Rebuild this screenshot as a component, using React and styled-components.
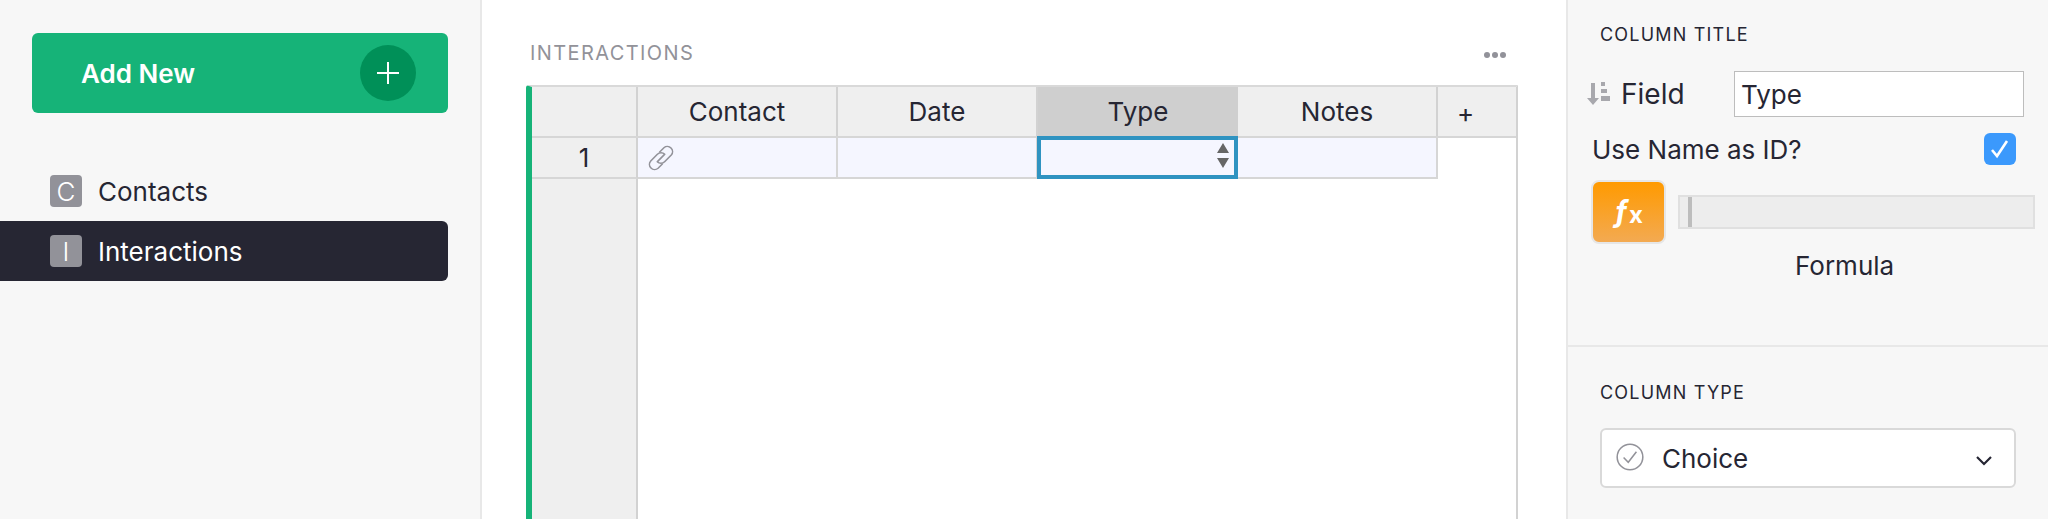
import React from "react";
import styled, { createGlobalStyle } from "styled-components";

const Global = createGlobalStyle`
  html, body { margin: 0; padding: 0; height: 519px; overflow: hidden; background: #fff; }
  * { box-sizing: border-box; }
  #root { height: 519px; }
`;

const Page = styled.div`
  display: flex;
  width: 2048px;
  height: 519px;
  overflow: hidden;
  font-family: Inter, "Liberation Sans", sans-serif;
  color: #262633;
`;

const Sidebar = styled.aside`
  width: 482px;
  flex: none;
  background: #f7f7f7;
  border-right: 2px solid #e8e8e8;
  padding-top: 33px;
`;

const AddButton = styled.div`
  display: flex;
  align-items: center;
  justify-content: space-between;
  width: 416px;
  height: 80px;
  margin-left: 32px;
  padding: 0 32px 0 49px;
  background: #16b378;
  border-radius: 6px;
  color: #fff;
  font-size: 26px;
  font-weight: 600;
`;

const AddCircle = styled.span`
  display: flex;
  align-items: center;
  justify-content: center;
  width: 56px;
  height: 56px;
  border-radius: 50%;
  background: #009058;
`;

const PageList = styled.nav`
  margin-top: 48px;
  width: 448px;
  display: flex;
  flex-direction: column;
`;

const PageRow = styled.div`
  display: flex;
  align-items: center;
  gap: 16px;
  height: 60px;
  padding-left: 50px;
  font-size: 26px;
  border-radius: 0 6px 6px 0;
  background: ${(p) => (p.$active ? "#262633" : "transparent")};
  color: ${(p) => (p.$active ? "#fff" : "#262633")};
`;

const PageBadge = styled.span`
  display: flex;
  align-items: center;
  justify-content: center;
  width: 32px;
  height: 32px;
  border-radius: 4px;
  background: #929299;
  color: #fff;
  font-size: 26px;
  font-weight: 300;
`;

const Main = styled.main`
  flex: 1;
  min-width: 0;
  background: #fff;
  padding: 0 48px 0 44px;
`;

const SectionHeader = styled.div`
  display: flex;
  align-items: center;
  justify-content: space-between;
  height: 85px;
  padding: 21px 12px 0 4px;
`;

const SectionTitle = styled.div`
  font-size: 20px;
  letter-spacing: 1.4px;
  color: #929299;
`;

const Dots = styled.div`
  display: flex;
  gap: 2px;
  margin-top: 4px;
`;

const Dot = styled.span`
  width: 6px;
  height: 6px;
  border-radius: 50%;
  background: #929299;
`;

const Grid = styled.div`
  position: relative;
  width: 992px;
  height: 434px;
  display: flex;
  flex-direction: column;
  border-left: 6px solid #16b378;
  border-top: 2px solid #d9d9d9;
  border-right: 2px solid #d2d2d2;
  border-top-left-radius: 3px;
`;

const HeaderRow = styled.div`
  display: flex;
  height: 51px;
  flex: none;
  border-bottom: 2px solid #d6d6d6;
`;

const RowNum = styled.div`
  flex: none;
  width: 106px;
  display: flex;
  align-items: center;
  justify-content: center;
  background: #efefef;
  border-right: 2px solid #d2d2d2;
  font-size: 26px;
`;

const HeadCell = styled.div`
  flex: none;
  width: ${(p) => p.$w}px;
  display: flex;
  align-items: center;
  justify-content: center;
  font-size: 26px;
  background: ${(p) => (p.$selected ? "#cfcfcf" : "#efefef")};
  border-right: ${(p) => (p.$selected ? "0" : "2px solid #d2d2d2")};
`;

const AddCol = styled.div`
  flex: 1;
  display: flex;
  align-items: center;
  justify-content: center;
  padding: 2px 23px 0 0;
  background: #efefef;
  font-size: 26px;
`;

const DataRow = styled.div`
  display: flex;
  height: 41px;
  flex: none;
`;

const RowNumData = styled(RowNum)`
  border-bottom: 2px solid #d6d6d6;
`;

const DataCell = styled.div`
  position: relative;
  flex: none;
  display: flex;
  align-items: center;
  width: ${(p) => p.$w}px;
  padding-left: 7px;
  background: #f5f6ff;
  border-right: ${(p) => (p.$selected ? "0" : "2px solid #d6d6d6")};
  border-bottom: 2px solid #d6d6d6;
`;

const Cursor = styled.div`
  position: absolute;
  left: -1px;
  top: -2px;
  right: 0;
  bottom: -2px;
  border: 4px solid #2f93c1;
`;

const Spinner = styled.svg`
  position: absolute;
  right: 9px;
  top: 5px;
`;

const EmptyArea = styled.div`
  flex: 1;
  display: flex;
`;

const EmptyNum = styled.div`
  flex: none;
  width: 106px;
  background: #efefef;
  border-right: 2px solid #d2d2d2;
`;

const Panel = styled.aside`
  width: 482px;
  flex: none;
  background: #f7f7f7;
  border-left: 2px solid #e8e8e8;
  display: flex;
  flex-direction: column;
`;

const PanelTop = styled.div`
  height: 347px;
  flex: none;
  border-bottom: 2px solid #e8e8e8;
  padding-top: 25px;
`;

const PanelLabel = styled.div`
  font-size: 18px;
  line-height: 20px;
  letter-spacing: 1.2px;
  padding-left: 32px;
  color: #262633;
`;

const FieldRow = styled.div`
  display: flex;
  align-items: center;
  margin-top: 26px;
  height: 46px;
  padding-left: 19px;
`;

const FieldLabel = styled.div`
  font-size: 28px;
  margin-left: 10px;
  width: 113px;
`;

const FieldInput = styled.div`
  width: 290px;
  height: 46px;
  background: #fff;
  border: 1px solid #bdbdbd;
  display: flex;
  align-items: center;
  padding-left: 6px;
  font-size: 26px;
`;

const IdRow = styled.div`
  display: flex;
  align-items: center;
  justify-content: space-between;
  margin-top: 16px;
  height: 32px;
  padding: 0 32px 0 24px;
  font-size: 26px;
`;

const CheckBox = styled.span`
  display: flex;
  align-items: center;
  justify-content: center;
  width: 32px;
  height: 32px;
  border-radius: 6px;
  background: #3b99fc;
`;

const FormulaRow = styled.div`
  display: flex;
  align-items: center;
  gap: 12px;
  margin-top: 15px;
  padding-left: 23px;
`;

const FxButton = styled.div`
  display: flex;
  align-items: center;
  justify-content: center;
  width: 75px;
  height: 64px;
  border: 2px solid #e6e6e6;
  border-radius: 8px;
  background: linear-gradient(#ff9a00, #f3aa52);
  color: #fff;
  font-weight: 700;
  line-height: 1;
`;

const FxF = styled.span`
  font-size: 30px;
  font-style: italic;
  margin-top: -3px;
`;

const FxX = styled.span`
  font-size: 24px;
  margin-left: 1px;
  margin-top: 6px;
`;

const Track = styled.div`
  width: 357px;
  height: 34px;
  background: #ededed;
  border: 2px solid #e0e0e0;
  padding-left: 8px;
`;

const Thumb = styled.div`
  width: 4px;
  height: 100%;
  background: #bdbdbd;
`;

const FormulaLabel = styled.div`
  font-size: 26px;
  margin-top: 6px;
  padding-left: 227px;
`;

const PanelBottom = styled.div`
  padding-top: 36px;
`;

const SelectBox = styled.div`
  display: flex;
  align-items: center;
  width: 416px;
  height: 60px;
  margin: 25px 0 0 32px;
  padding: 0 22px 0 14px;
  background: #fff;
  border: 2px solid #d9d9d9;
  border-radius: 6px;
  font-size: 26px;
`;

const SelectText = styled.span`
  flex: 1;
  margin-left: 18px;
`;

const CheckIcon = styled.svg`
  margin-top: -3px;
`;

const Chevron = styled.svg`
  margin: 5px -1px 0 0;
`;

export default function App() {
  return (
    <Page>
      <Global />
      <Sidebar>
        <AddButton>
          Add New
          <AddCircle>
            <svg width="24" height="24" viewBox="0 0 24 24">
              <path d="M12 1v22M1 12h22" stroke="#fff" strokeWidth="2" />
            </svg>
          </AddCircle>
        </AddButton>
        <PageList>
          <PageRow>
            <PageBadge>C</PageBadge>
            Contacts
          </PageRow>
          <PageRow $active>
            <PageBadge>I</PageBadge>
            Interactions
          </PageRow>
        </PageList>
      </Sidebar>
      <Main>
        <SectionHeader>
          <SectionTitle>INTERACTIONS</SectionTitle>
          <Dots>
            <Dot />
            <Dot />
            <Dot />
          </Dots>
        </SectionHeader>
        <Grid>
          <HeaderRow>
            <RowNum />
            <HeadCell $w={200}>Contact</HeadCell>
            <HeadCell $w={200}>Date</HeadCell>
            <HeadCell $w={200} $selected>Type</HeadCell>
            <HeadCell $w={200}>Notes</HeadCell>
            <AddCol>+</AddCol>
          </HeaderRow>
          <DataRow>
            <RowNumData>1</RowNumData>
            <DataCell $w={200}>
              <svg width="32" height="32" viewBox="0 0 24 24" fill="none" stroke="#929299" strokeWidth="1.2" strokeLinecap="round">
                <path d="M14.5 9.5L9.5 14.5" />
                <path d="M11 7.5l3.2-3.2a3.9 3.9 0 0 1 5.5 5.5l-5 5a3.9 3.9 0 0 1-5.5 0" />
                <path d="M13 16.5l-3.2 3.2a3.9 3.9 0 0 1-5.5-5.5l5-5a3.9 3.9 0 0 1 5.5 0" />
              </svg>
            </DataCell>
            <DataCell $w={200} />
            <DataCell $w={200} $selected>
              <Cursor />
              <Spinner width="12" height="26" viewBox="0 0 12 26">
                <path d="M6 0l6 10H0zM0 15h12L6 25z" fill="#666" />
              </Spinner>
            </DataCell>
            <DataCell $w={200} />
          </DataRow>
          <EmptyArea>
            <EmptyNum />
          </EmptyArea>
        </Grid>
      </Main>
      <Panel>
        <PanelTop>
          <PanelLabel>COLUMN TITLE</PanelLabel>
          <FieldRow>
            <svg width="24" height="26" viewBox="0 0 24 26" fill="#a8a8ad">
              <path d="M4 2h4v15h4l-6 7-6-7h4z" />
              <path d="M14 1h4v4h-4zM14 8h6v4h-6zM14 15h9v5h-9z" />
            </svg>
            <FieldLabel>Field</FieldLabel>
            <FieldInput>Type</FieldInput>
          </FieldRow>
          <IdRow>
            Use Name as ID?
            <CheckBox>
              <svg width="20" height="20" viewBox="0 0 20 20" fill="none" stroke="#fff" strokeWidth="2.6">
                <path d="M2 11l5 6L17 2" />
              </svg>
            </CheckBox>
          </IdRow>
          <FormulaRow>
            <FxButton>
              <FxF>ƒ</FxF>
              <FxX>x</FxX>
            </FxButton>
            <Track>
              <Thumb />
            </Track>
          </FormulaRow>
          <FormulaLabel>Formula</FormulaLabel>
        </PanelTop>
        <PanelBottom>
          <PanelLabel>COLUMN TYPE</PanelLabel>
          <SelectBox>
            <CheckIcon width="28" height="28" viewBox="0 0 24 24" fill="none" stroke="#929299" strokeWidth="1.3">
              <circle cx="12" cy="12" r="11" />
              <path d="M6.5 12.5l4 4 7-9" />
            </CheckIcon>
            <SelectText>Choice</SelectText>
            <Chevron width="18" height="12" viewBox="0 0 18 12" fill="none" stroke="#262633" strokeWidth="2.2">
              <path d="M2 2l7 7 7-7" />
            </Chevron>
          </SelectBox>
        </PanelBottom>
      </Panel>
    </Page>
  );
}
